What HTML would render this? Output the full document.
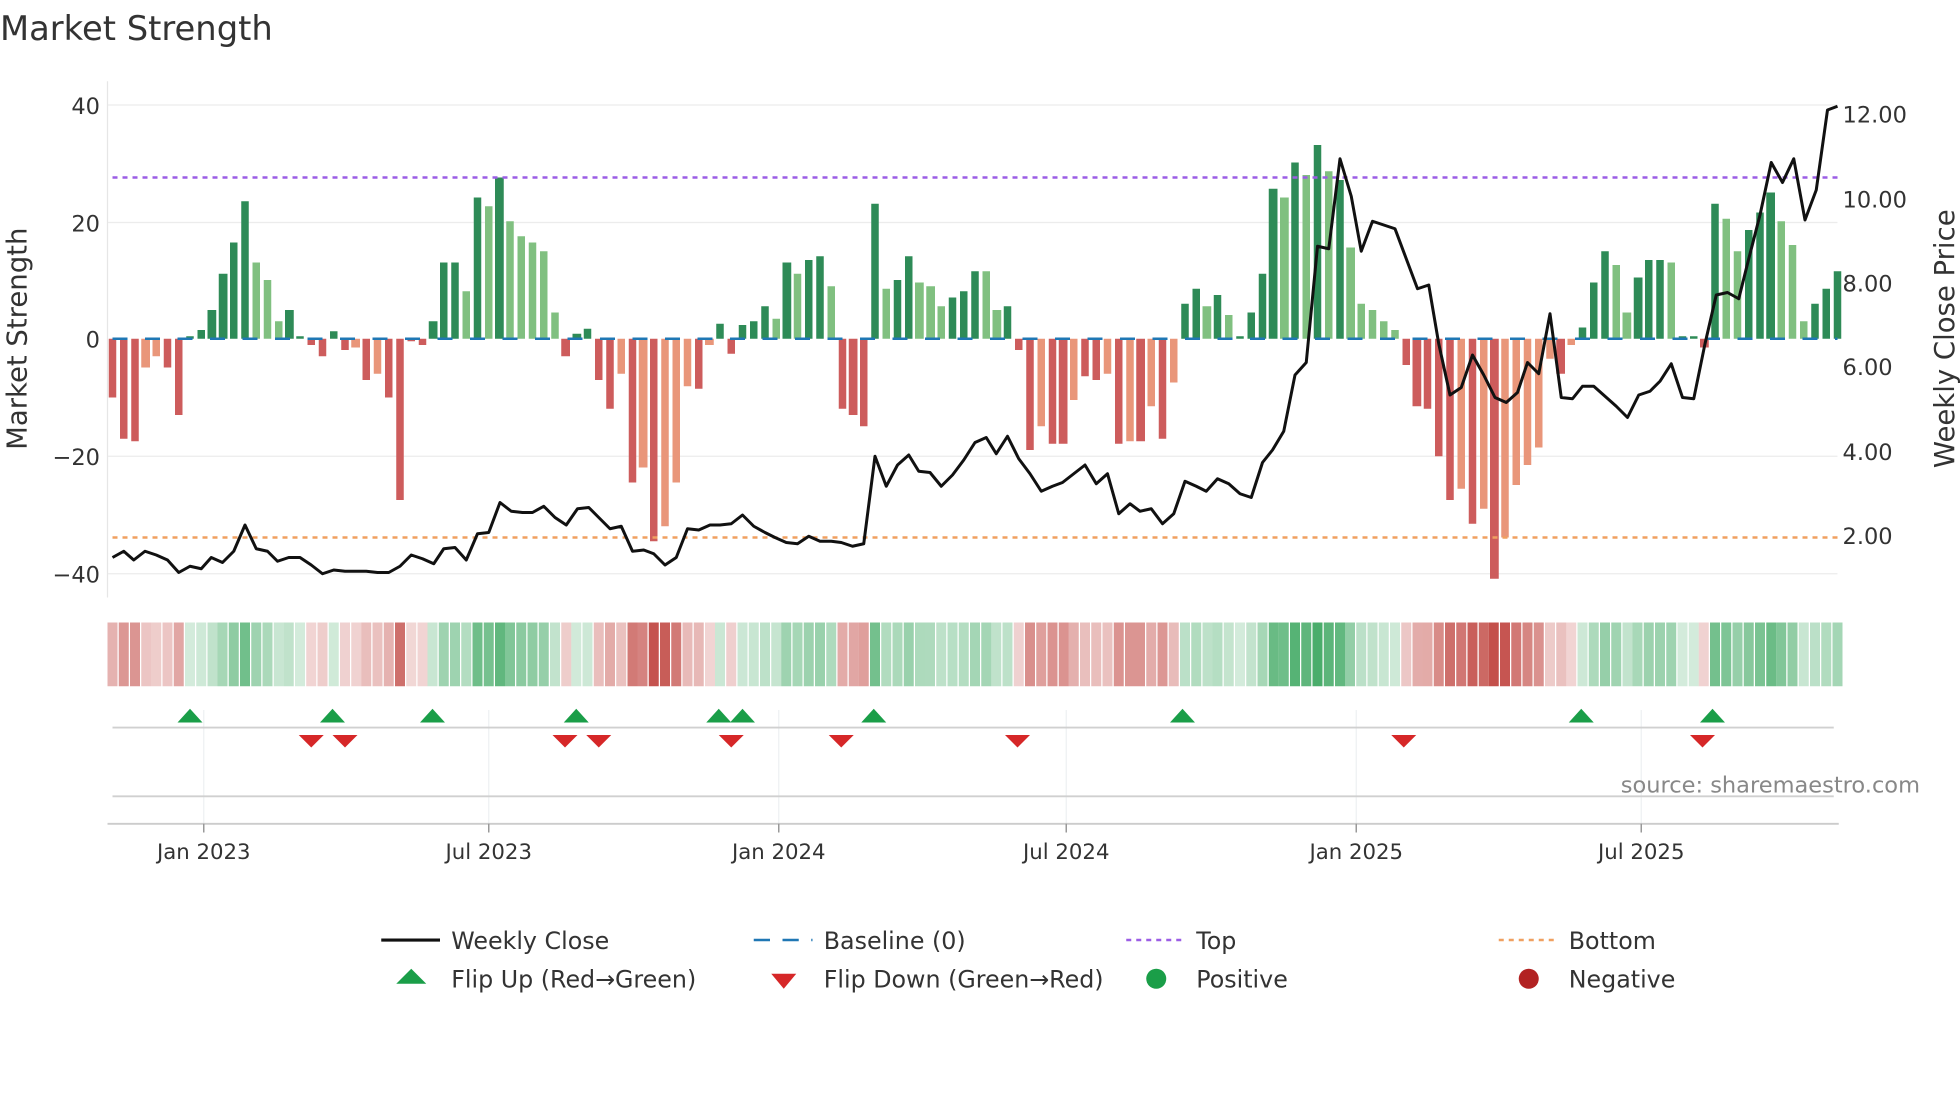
<!DOCTYPE html>
<html><head><meta charset="utf-8">
<style>
html,body{margin:0;padding:0;background:#fff;width:1960px;height:1102px;overflow:hidden;}
#w{position:absolute;left:0;top:0;width:1568px;height:882px;transform:scale(1.25);transform-origin:0 0;}
svg{position:absolute;left:0;top:0;font-family:"DejaVu Sans","Liberation Sans",sans-serif;}
#bars{position:absolute;left:85.58px;top:271px;display:flex;height:0;}
.b{width:8.846px;height:0;position:relative;flex:none;}
.b::before{content:"";position:absolute;left:1.32px;width:6.2px;height:calc(var(--v)*4.69px);}
.g::before,.G::before{bottom:0;}
.r::before,.R::before{top:0;}
.g::before{background:#2e8b57}.G::before{background:#80c080}
.r::before{background:#cd5c5c}.R::before{background:#e9967a}
.b::after{content:"";position:absolute;left:0.4px;width:8px;top:227px;height:51px;opacity:calc(0.22 + var(--v)*0.022);}
.g::after,.G::after{background:#3fa862}
.r::after,.R::after{background:#c4504b}
</style></head>
<body><div id="w">
<svg width="1568" height="882" viewBox="0 0 1568 882" xmlns="http://www.w3.org/2000/svg">
<text x="0" y="32" font-size="27" fill="#333">Market Strength</text>
<g stroke="#ececec" stroke-width="1">
<line x1="86" x2="1470" y1="84" y2="84"/><line x1="86" x2="1470" y1="178" y2="178"/>
<line x1="86" x2="1470" y1="365" y2="365"/><line x1="86" x2="1470" y1="459" y2="459"/>
</g>
<line x1="86" x2="86" y1="65" y2="478" stroke="#e6e6e6"/>
<g font-size="18" fill="#333" text-anchor="end">
<text x="80" y="91">40</text><text x="80" y="185">20</text><text x="80" y="278">0</text>
<text x="80" y="372">−20</text><text x="80" y="466">−40</text>
</g>
<g font-size="18" fill="#333">
<text x="1474" y="98">12.00</text><text x="1474" y="166">10.00</text><text x="1474" y="233">8.00</text>
<text x="1474" y="300">6.00</text><text x="1474" y="368">4.00</text><text x="1474" y="435">2.00</text>
</g>
<text transform="translate(21,271) rotate(-90)" font-size="22" fill="#333" text-anchor="middle">Market Strength</text>
<text transform="translate(1563,271) rotate(-90)" font-size="22" fill="#333" text-anchor="middle">Weekly Close Price</text>
<g stroke="#eef0f3" stroke-width="1">
<line x1="163" x2="163" y1="568" y2="659"/><line x1="391" x2="391" y1="568" y2="659"/>
<line x1="623" x2="623" y1="568" y2="659"/><line x1="853" x2="853" y1="568" y2="659"/>
<line x1="1085" x2="1085" y1="568" y2="659"/><line x1="1313" x2="1313" y1="568" y2="659"/>
</g>
<line x1="90" x2="1467" y1="582" y2="582" stroke="#d0d0d0" stroke-width="1.5"/>
<line x1="90" x2="1467" y1="637" y2="637" stroke="#d0d0d0" stroke-width="1.5"/>
<line x1="86" x2="1471" y1="659" y2="659" stroke="#ccc" stroke-width="1.5"/>
<g stroke="#999" stroke-width="1.2">
<line x1="163" x2="163" y1="659" y2="666"/><line x1="391" x2="391" y1="659" y2="666"/>
<line x1="623" x2="623" y1="659" y2="666"/><line x1="853" x2="853" y1="659" y2="666"/>
<line x1="1085" x2="1085" y1="659" y2="666"/><line x1="1313" x2="1313" y1="659" y2="666"/>
</g>
<g font-size="17" fill="#333" text-anchor="middle">
<text x="163" y="687">Jan 2023</text><text x="391" y="687">Jul 2023</text>
<text x="623" y="687">Jan 2024</text><text x="853" y="687">Jul 2024</text>
<text x="1085" y="687">Jan 2025</text><text x="1313" y="687">Jul 2025</text>
</g>
<text x="1536" y="634" font-size="18" fill="#888" text-anchor="end">source: sharemaestro.com</text>
<g font-size="19" fill="#333">
<line x1="305" x2="352" y1="752" y2="752" stroke="#111" stroke-width="2.5"/>
<text x="361" y="759">Weekly Close</text>
<line x1="603" x2="650" y1="752" y2="752" stroke="#1f77b4" stroke-width="2" stroke-dasharray="13,10"/>
<text x="659" y="759">Baseline (0)</text>
<line x1="901" x2="948" y1="752" y2="752" stroke="#9b5de5" stroke-width="2" stroke-dasharray="4,4"/>
<text x="957" y="759">Top</text>
<line x1="1199" x2="1246" y1="752" y2="752" stroke="#f0a060" stroke-width="2" stroke-dasharray="4,4"/>
<text x="1255" y="759">Bottom</text>
<polygon points="329,775 317,787 341,787" fill="#1a9e48"/>
<text x="361" y="790">Flip Up (Red→Green)</text>
<polygon points="617,779 637,779 627,791" fill="#d62728"/>
<text x="659" y="790">Flip Down (Green→Red)</text>
<circle cx="925" cy="783" r="8" fill="#1a9e48"/>
<text x="957" y="790">Positive</text>
<circle cx="1223" cy="783" r="8" fill="#b22222"/>
<text x="1255" y="790">Negative</text>
</g>
</svg>
<div id="bars">
<i class="b r" style="--v:10"></i><i class="b r" style="--v:17"></i><i class="b r" style="--v:17.5"></i><i class="b R" style="--v:5"></i><i class="b R" style="--v:3"></i><i class="b r" style="--v:5"></i><i class="b r" style="--v:13"></i><i class="b g" style="--v:0.5"></i><i class="b g" style="--v:1.5"></i><i class="b g" style="--v:5"></i>
<i class="b g" style="--v:11"></i><i class="b g" style="--v:16.5"></i><i class="b g" style="--v:23.5"></i><i class="b G" style="--v:13"></i><i class="b G" style="--v:10"></i><i class="b G" style="--v:3"></i><i class="b g" style="--v:5"></i><i class="b g" style="--v:0.5"></i><i class="b r" style="--v:1"></i><i class="b r" style="--v:3"></i>
<i class="b g" style="--v:1.3"></i><i class="b r" style="--v:2"></i><i class="b R" style="--v:1.5"></i><i class="b r" style="--v:7"></i><i class="b R" style="--v:6"></i><i class="b r" style="--v:10"></i><i class="b r" style="--v:27.5"></i><i class="b r" style="--v:0.5"></i><i class="b r" style="--v:1"></i><i class="b g" style="--v:3"></i>
<i class="b g" style="--v:13"></i><i class="b g" style="--v:13"></i><i class="b G" style="--v:8"></i><i class="b g" style="--v:24"></i><i class="b G" style="--v:22.5"></i><i class="b g" style="--v:27.5"></i><i class="b G" style="--v:20"></i><i class="b G" style="--v:17.5"></i><i class="b G" style="--v:16.5"></i><i class="b G" style="--v:15"></i>
<i class="b G" style="--v:4.5"></i><i class="b r" style="--v:3"></i><i class="b g" style="--v:0.8"></i><i class="b g" style="--v:1.8"></i><i class="b r" style="--v:7"></i><i class="b r" style="--v:12"></i><i class="b R" style="--v:6"></i><i class="b r" style="--v:24.5"></i><i class="b R" style="--v:22"></i><i class="b r" style="--v:34.5"></i>
<i class="b R" style="--v:32"></i><i class="b R" style="--v:24.5"></i><i class="b R" style="--v:8"></i><i class="b r" style="--v:8.5"></i><i class="b R" style="--v:1"></i><i class="b g" style="--v:2.5"></i><i class="b r" style="--v:2.5"></i><i class="b g" style="--v:2.3"></i><i class="b g" style="--v:3"></i><i class="b g" style="--v:5.5"></i>
<i class="b G" style="--v:3.5"></i><i class="b g" style="--v:13"></i><i class="b G" style="--v:11"></i><i class="b g" style="--v:13.5"></i><i class="b g" style="--v:14"></i><i class="b G" style="--v:9"></i><i class="b r" style="--v:12"></i><i class="b r" style="--v:13"></i><i class="b r" style="--v:15"></i><i class="b g" style="--v:23"></i>
<i class="b G" style="--v:8.5"></i><i class="b g" style="--v:10"></i><i class="b g" style="--v:14"></i><i class="b G" style="--v:9.5"></i><i class="b G" style="--v:9"></i><i class="b G" style="--v:5.5"></i><i class="b g" style="--v:7"></i><i class="b g" style="--v:8"></i><i class="b g" style="--v:11.5"></i><i class="b G" style="--v:11.5"></i>
<i class="b G" style="--v:5"></i><i class="b g" style="--v:5.5"></i><i class="b r" style="--v:2"></i><i class="b r" style="--v:19"></i><i class="b R" style="--v:15"></i><i class="b r" style="--v:18"></i><i class="b r" style="--v:18"></i><i class="b R" style="--v:10.5"></i><i class="b r" style="--v:6.5"></i><i class="b r" style="--v:7"></i>
<i class="b R" style="--v:6"></i><i class="b r" style="--v:18"></i><i class="b R" style="--v:17.5"></i><i class="b r" style="--v:17.5"></i><i class="b R" style="--v:11.5"></i><i class="b r" style="--v:17"></i><i class="b R" style="--v:7.5"></i><i class="b g" style="--v:6"></i><i class="b g" style="--v:8.5"></i><i class="b G" style="--v:5.5"></i>
<i class="b g" style="--v:7.5"></i><i class="b G" style="--v:4"></i><i class="b g" style="--v:0.5"></i><i class="b g" style="--v:4.5"></i><i class="b g" style="--v:11"></i><i class="b g" style="--v:25.5"></i><i class="b G" style="--v:24"></i><i class="b g" style="--v:30"></i><i class="b G" style="--v:28"></i><i class="b g" style="--v:33"></i>
<i class="b G" style="--v:28.5"></i><i class="b g" style="--v:27"></i><i class="b G" style="--v:15.5"></i><i class="b G" style="--v:6"></i><i class="b G" style="--v:5"></i><i class="b G" style="--v:3"></i><i class="b G" style="--v:1.5"></i><i class="b r" style="--v:4.5"></i><i class="b r" style="--v:11.5"></i><i class="b r" style="--v:12"></i>
<i class="b r" style="--v:20"></i><i class="b r" style="--v:27.5"></i><i class="b R" style="--v:25.5"></i><i class="b r" style="--v:31.5"></i><i class="b R" style="--v:29"></i><i class="b r" style="--v:41"></i><i class="b R" style="--v:34"></i><i class="b R" style="--v:25"></i><i class="b R" style="--v:21.5"></i><i class="b R" style="--v:18.5"></i>
<i class="b R" style="--v:3.5"></i><i class="b r" style="--v:6"></i><i class="b R" style="--v:1"></i><i class="b g" style="--v:2"></i><i class="b g" style="--v:9.5"></i><i class="b g" style="--v:15"></i><i class="b G" style="--v:12.5"></i><i class="b G" style="--v:4.5"></i><i class="b g" style="--v:10.5"></i><i class="b g" style="--v:13.5"></i>
<i class="b g" style="--v:13.5"></i><i class="b G" style="--v:13"></i><i class="b g" style="--v:0.5"></i><i class="b g" style="--v:0.5"></i><i class="b r" style="--v:1.5"></i><i class="b g" style="--v:23"></i><i class="b G" style="--v:20.5"></i><i class="b G" style="--v:15"></i><i class="b g" style="--v:18.5"></i><i class="b g" style="--v:21.5"></i>
<i class="b g" style="--v:25"></i><i class="b G" style="--v:20"></i><i class="b G" style="--v:16"></i><i class="b G" style="--v:3"></i><i class="b g" style="--v:6"></i><i class="b g" style="--v:8.5"></i><i class="b g" style="--v:11.5"></i>
</div>
<svg width="1568" height="882" viewBox="0 0 1568 882" xmlns="http://www.w3.org/2000/svg">
<line x1="90" x2="1470" y1="271" y2="271" stroke="#1f77b4" stroke-width="2" stroke-dasharray="12,14"/>
<line x1="90" x2="1470" y1="142" y2="142" stroke="#9b5de5" stroke-width="2" stroke-dasharray="4,4"/>
<line x1="90" x2="1470" y1="430" y2="430" stroke="#f0a060" stroke-width="2" stroke-dasharray="4,4"/>
<polyline fill="none" stroke="#111" stroke-width="2.4" stroke-linejoin="round" points="90,446 99,441 107,448 116,441 125,444 134,448 143,458 152,453 161,455 169,446 178,450 187,441 196,420 205,439 214,441 222,449 231,446 240,446 249,452 258,459 267,456 276,457 285,457 293,457 302,458 311,458 320,453 329,444 338,447 347,451 355,439 364,438 373,448 382,427 391,426 400,402 409,409 418,410 426,410 435,405 444,414 453,420 462,407 471,406 479,414 488,423 497,421 506,441 515,440 523,443 532,452 541,446 550,423 559,424 568,420 576,420 585,419 594,412 603,421 612,426 620,430 629,434 638,435 647,429 656,433 665,433 673,434 682,437 691,435 700,365 709,389 718,372 727,364 735,377 744,378 753,389 762,380 771,368 780,354 789,350 797,363 806,349 815,367 824,379 833,393 842,389 850,386 859,379 868,372 877,387 886,379 895,411 904,403 912,409 921,407 930,419 939,411 948,385 957,389 965,393 974,383 983,387 992,395 1001,398 1010,370 1018,360 1027,345 1036,300 1045,290 1054,197 1063,199 1072,127 1081,157 1089,201 1098,177 1107,180 1116,183 1125,207 1134,231 1143,228 1151,275 1160,316 1169,310 1178,284 1187,300 1196,318 1205,322 1214,314 1222,290 1231,299 1240,251 1249,318 1258,319 1266,309 1275,309 1284,317 1293,325 1302,334 1311,316 1320,313 1328,305 1337,291 1346,318 1355,319 1364,275 1373,236 1382,234 1391,239 1399,207 1408,172 1417,130 1426,146 1435,127 1444,176 1453,152 1462,88 1470,85"/>
<g fill="#1a9e48">
<polygon points="152,567 142,578 162,578"/><polygon points="266,567 256,578 276,578"/><polygon points="346,567 336,578 356,578"/><polygon points="461,567 451,578 471,578"/><polygon points="575,567 565,578 585,578"/><polygon points="594,567 584,578 604,578"/><polygon points="699,567 689,578 709,578"/><polygon points="946,567 936,578 956,578"/><polygon points="1265,567 1255,578 1275,578"/><polygon points="1370,567 1360,578 1380,578"/>
</g>
<g fill="#d62728">
<polygon points="239,588 259,588 249,598"/><polygon points="266,588 286,588 276,598"/><polygon points="442,588 462,588 452,598"/><polygon points="469,588 489,588 479,598"/><polygon points="575,588 595,588 585,598"/><polygon points="663,588 683,588 673,598"/><polygon points="804,588 824,588 814,598"/><polygon points="1113,588 1133,588 1123,598"/><polygon points="1352,588 1372,588 1362,598"/>
</g>
</svg>
</div>
</body></html>
